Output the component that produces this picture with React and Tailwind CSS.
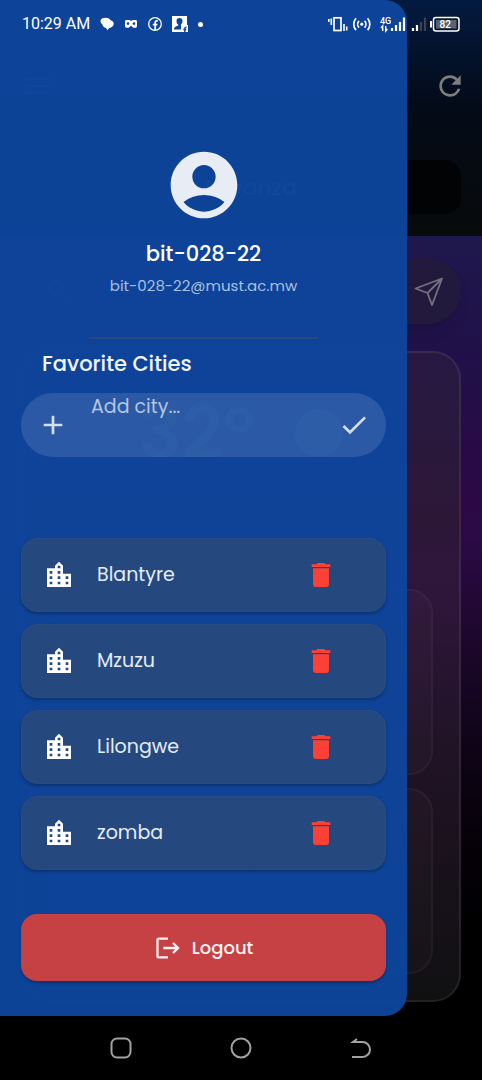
import { MdAccountCircle, MdAdd, MdCheck, MdDelete, MdLocationCity, MdLogout, MdMenu, MdRefresh, MdSearch } from "react-icons/md";

const cities = ["Blantyre", "Mzuzu", "Lilongwe", "zomba"];

function StatusBar() {
  return (
    <div className="absolute inset-x-0 top-0 z-20 flex h-12 items-center justify-between pr-5 pl-[22px] font-[Roboto,sans-serif] text-white">
      <div className="flex items-center gap-2.5">
        <span className="text-base">10:29 AM</span>
        <svg className="h-4 w-3.5" viewBox="0 0 15 16" fill="#fff" aria-hidden="true">
          <path d="M4.500 1.500C1.800 1.700.2 3.200.6 5.200c.2 1.500 1 2.400 1.900 3 .4 2 1.900 3.500 3.900 4L8 14.800l1.800-2.500c3-.3 4.900-2.100 4.900-4.500 0-2-1.400-3.500-3.400-3.900C10 2 7.500 1.100 4.500 1.500z" />
        </svg>
        <svg className="h-4 w-3.5" viewBox="0 0 14 16" aria-hidden="true">
          <path fill="#fff" fillRule="evenodd" d="M2.500 4h3L7 5l1.500-1h3c1 0 1.500.6 1.500 1.500v4.500c0 1-.6 1.700-1.500 1.700H9.300L7 9.800l-2.300 1.900H2.500c-1 0-1.500-.7-1.500-1.700V5.500C1 4.600 1.500 4 2.500 4zM4 6.300a1.300 1.300 0 1 0 0 2.600A1.300 1.300 0 1 0 4 6.300zm6 0a1.300 1.300 0 1 0 0 2.600A1.300 1.300 0 1 0 10 6.300z" />
        </svg>
        <svg className="h-4 w-3.5" viewBox="0 0 14 16" fill="none" stroke="#fff" aria-hidden="true">
          <circle cx="7" cy="8" r="6.300" strokeWidth="1.300" />
          <path strokeWidth="1.800" d="M7.200 14V6.800c0-1.600.8-2.200 2.600-2M4.800 8.700h4.600" />
        </svg>
        <svg className="size-4" viewBox="0 0 16 16" aria-hidden="true">
          <path fill="#fff" d="M0 0h15v9h1v7H0z" />
          <path fill="#0d459c" d="M7.500 2C5.600 2 4.500 3.300 4.500 5c0 1.800.8 3.100 1.700 3.600v.9C3.500 10.300 2 11.300 2 13.500h7V9.700l-.2-1.100c1-.7 1.700-2 1.700-3.600 0-1.700-1.100-3-3-3z" />
          <path fill="#fff" d="M9 9.500h7V16H9z" />
          <path stroke="#0d459c" strokeWidth="1.400" fill="none" d="M12.800 16v-3.500c0-1 .6-1.300 1.700-1.200M11.300 13.500h3" />
        </svg>
        <span className="size-[5px] rounded-full bg-white" />
      </div>
      <svg className="h-5 w-[134px]" viewBox="328 14 134 20" fill="none" stroke="#fff" aria-hidden="true">
        <path strokeWidth="1.600" d="M328.800 19v3M331.300 18.500v6.500M344 24v7M346.700 26.500v4" />
        <rect x="334" y="17.800" width="7" height="12.700" strokeWidth="1.700" />
        <path strokeWidth="1.700" d="M359 20.800a5 5 0 0 0 0 6.800M364.600 20.800a5 5 0 0 1 0 6.800M356 18.300a9 9 0 0 0 0 11.800M367.600 18.300a9 9 0 0 1 0 11.800" />
        <circle cx="361.800" cy="24.200" r="1.600" fill="#fff" stroke="none" />
        <text x="380" y="24" fill="#fff" stroke="none" fontSize="9" fontWeight="500">4G</text>
        <path strokeWidth="1.400" d="M382.700 31v-5l-1.700 2M385.700 26v5l1.700-2" />
        <path strokeWidth="2.200" d="M392 31v-3M396 31v-6M400 31v-9M404 31V17.500M413 31v-3M417 31v-6" />
        <path stroke="#3b4251" strokeWidth="2.200" d="M421 31v-9M425 31V17.500" />
        <rect x="433.500" y="17.500" width="25.500" height="13.500" rx="2.500" strokeWidth="1.500" />
        <rect x="436" y="20" width="20.500" height="8.500" fill="#5b6170" stroke="none" />
        <path strokeWidth="2" d="M431 21v6.500" />
        <text x="439.500" y="28" fill="#fff" stroke="none" fontSize="10" fontWeight="500">82</text>
      </svg>
    </div>
  );
}

function WeatherPage() {
  return (
    <main className="flex flex-1 flex-col bg-[linear-gradient(#1e184d_23%,#211049_36%,#2b0844_48%,#2b0a45_53%,#1d072c_63%,#0e0416_74%,#040106_84%,#000_92%)] text-[#7d7d7d]">
      <header className="flex h-[236px] flex-col bg-[linear-gradient(#031a40,#030b18_45%,#080a0a)] pr-4 pl-[21px]">
        <div className="flex items-center justify-between pt-[70px]">
          <MdMenu className="size-8" aria-hidden="true" />
          <MdRefresh className="size-8" aria-hidden="true" />
        </div>
        <div className="mt-[58px] mr-[5px] flex h-[54px] items-center justify-center rounded-2xl bg-[#020304] pl-5 text-[22px] font-medium">Mwanza</div>
      </header>
      <div className="mx-[21px] mt-[22px] flex h-[66px] items-center justify-between rounded-full bg-[#221a3c] px-4 shadow-lg">
        <MdSearch className="ml-2 size-7 text-[#3a3450]" aria-hidden="true" />
        <svg className="size-8" viewBox="0 0 32 32" fill="none" stroke="#77707f" strokeWidth="1.800" strokeLinejoin="round" aria-hidden="true">
          <path d="M29 3.500 2.500 13.500l12 4.500 4.500 12zM29 3.500 14.500 18" />
        </svg>
      </div>
      <section className="mx-[21px] mt-[27px] flex h-[651px] flex-col justify-end gap-[13px] rounded-[28px] border-2 border-white/8 bg-[linear-gradient(#261942,#2c1737_25%,#2e163b_37%,#211326_60%,#101011)] bg-origin-border px-[26px] pb-[26px]">
        <div className="mb-auto flex items-center justify-center gap-10 pt-11">
          <span className="text-7xl leading-none font-semibold">32º</span>
          <span className="size-12 rounded-full bg-current" />
        </div>
        <div className="h-[186px] rounded-3xl border-2 border-white/4 bg-white/2" />
        <div className="h-[186px] rounded-3xl border-2 border-white/4 bg-white/2" />
      </section>
    </main>
  );
}

function CityRow({ name }) {
  return (
    <li className="flex h-[74px] items-center rounded-2xl border border-[#2a4c83] bg-[#25497f] pr-12 pl-[21px] shadow-[0_2px_3px_rgba(0,0,0,0.25)]">
      <MdLocationCity className="size-8 text-white" aria-hidden="true" />
      <span className="ml-[22px] flex-1 text-[19px] text-[#e6edf7]">{name}</span>
      <button type="button" aria-label={`Remove ${name}`}>
        <MdDelete className="size-8 text-[#fb4135]" />
      </button>
    </li>
  );
}

function Drawer() {
  return (
    <aside className="absolute inset-y-0 left-0 z-10 flex w-[407px] max-w-[85%] flex-col rounded-r-[22px] bg-[#0d459c]/97 px-[21px]">
      <div className="flex flex-col items-center pt-[145px]">
        <MdAccountCircle className="size-20 text-[#e7ecf5]" aria-hidden="true" />
        <h1 className="mt-[13px] text-[21px] leading-8 font-medium text-white">bit-028-22</h1>
        <p className="mt-1 text-[15px] leading-6 text-[#a9c0e2]">bit-028-22@must.ac.mw</p>
      </div>
      <hr className="mx-[68px] mt-[39px] border-t-2 border-[#28497d]" />
      <h2 className="mt-[9px] ml-[21px] text-[21px] leading-8 font-medium text-[#f0f5fc]">Favorite Cities</h2>
      <form className="mt-[13px] flex h-16 rounded-full bg-white/12 px-4" onSubmit={(e) => e.preventDefault()}>
        <MdAdd className="size-8 self-center text-[#d3def0]" aria-hidden="true" />
        <input
          aria-label="Add city"
          placeholder="Add city..."
          className="ml-[22px] h-7 min-w-0 flex-1 bg-transparent text-[19px] outline-none placeholder:text-[#b4c6e3]"
        />
        <button type="submit" aria-label="Save city" className="self-center">
          <MdCheck className="size-8 text-[#d3def0]" />
        </button>
      </form>
      <ul className="mt-[81px] flex flex-col gap-3">
        {cities.map((name) => (
          <CityRow key={name} name={name} />
        ))}
      </ul>
      <button type="button" className="mt-11 flex h-[67px] items-center justify-center gap-2.5 rounded-2xl bg-[#c54144] text-lg font-medium text-[#fdf3f3] shadow-[0_2px_3px_rgba(0,0,0,0.25)]">
        <MdLogout className="size-7" aria-hidden="true" />
        Logout
      </button>
    </aside>
  );
}

function NavBar() {
  return (
    <nav className="flex h-16 items-center justify-center gap-24 bg-black text-[#a3a3a3]">
      <button type="button" aria-label="Recent apps">
        <svg className="size-6" viewBox="0 0 24 24" fill="none" stroke="currentColor" strokeWidth="2"><rect x="2.500" y="2.500" width="19" height="19" rx="5.500" /></svg>
      </button>
      <button type="button" aria-label="Home">
        <svg className="size-6" viewBox="0 0 24 24" fill="none" stroke="currentColor" strokeWidth="2"><circle cx="12" cy="12" r="9.500" /></svg>
      </button>
      <button type="button" aria-label="Back">
        <svg className="size-6" viewBox="0 0 24 24" fill="none" stroke="currentColor" strokeWidth="2"><path d="M3 21h10.500a7.500 7.500 0 0 0 0-15H4l4-3" /></svg>
      </button>
    </nav>
  );
}

export default function App() {
  return (
    <div className="flex min-h-screen flex-col bg-black font-[Poppins,Inter,sans-serif]">
      <div className="relative flex flex-1 flex-col">
        <StatusBar />
        <WeatherPage />
        <Drawer />
      </div>
      <NavBar />
    </div>
  );
}
